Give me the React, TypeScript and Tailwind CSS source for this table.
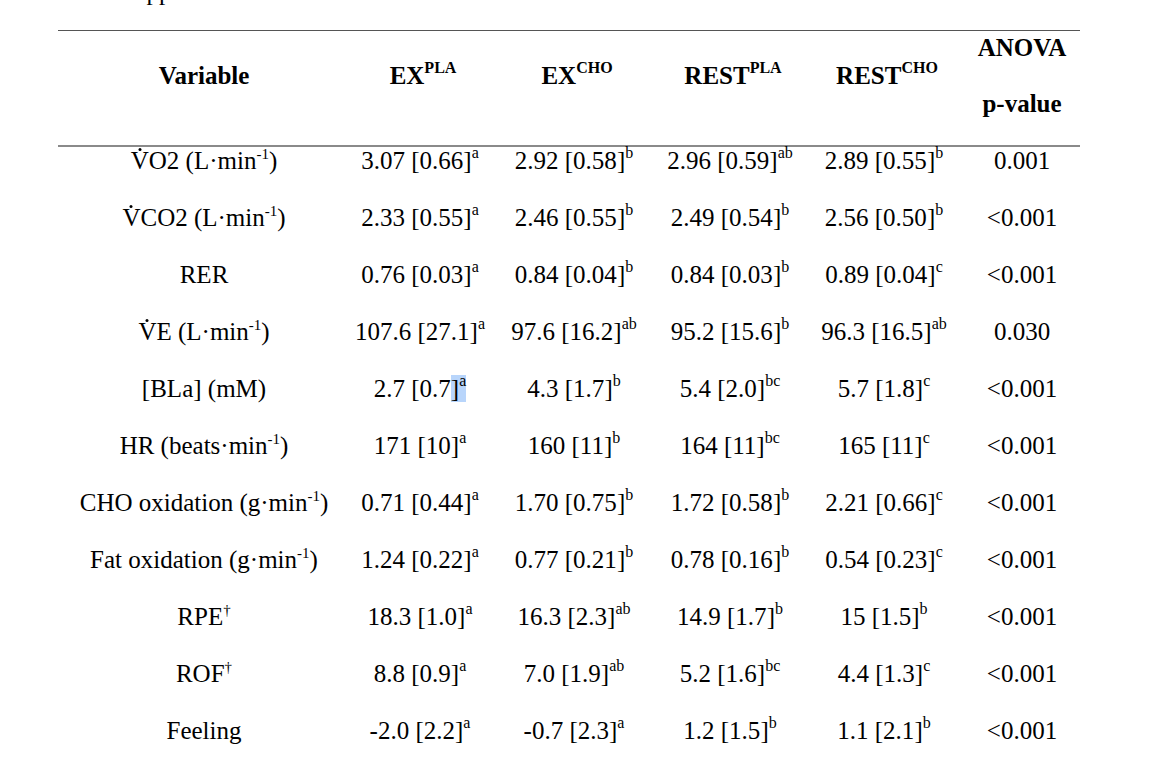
import React from 'react';

interface Cell {
  value: string;
  sup: string;
  highlight?: boolean;
}

interface Row {
  label: React.ReactNode;
  cells: Cell[];
  p: string;
}

// Small dot drawn over a letter (V-dot for rates)
const DotOver = ({ letter }: { letter: string }) => (
  <span className="relative inline-block">
    {letter}
    <span className="absolute left-1/2 top-[1px] h-[3px] w-[3px] -translate-x-1/2 rounded-full bg-black" />
  </span>
);

const PerMin = ({ unit }: { unit: string }) => (
  <>
    ({unit}·min<sup className="top-[-10px] text-[15px]">-1</sup>)
  </>
);

const c = (value: string, sup: string, highlight = false): Cell => ({ value, sup, highlight });

const rows: Row[] = [
  {
    label: <><DotOver letter="V" />O2 <PerMin unit="L" /></>,
    cells: [c('3.07 [0.66', 'a'), c('2.92 [0.58', 'b'), c('2.96 [0.59', 'ab'), c('2.89 [0.55', 'b')],
    p: '0.001',
  },
  {
    label: <><DotOver letter="V" />CO2 <PerMin unit="L" /></>,
    cells: [c('2.33 [0.55', 'a'), c('2.46 [0.55', 'b'), c('2.49 [0.54', 'b'), c('2.56 [0.50', 'b')],
    p: '<0.001',
  },
  {
    label: 'RER',
    cells: [c('0.76 [0.03', 'a'), c('0.84 [0.04', 'b'), c('0.84 [0.03', 'b'), c('0.89 [0.04', 'c')],
    p: '<0.001',
  },
  {
    label: <><DotOver letter="V" />E <PerMin unit="L" /></>,
    cells: [c('107.6 [27.1', 'a'), c('97.6 [16.2', 'ab'), c('95.2 [15.6', 'b'), c('96.3 [16.5', 'ab')],
    p: '0.030',
  },
  {
    label: '[BLa] (mM)',
    cells: [c('2.7 [0.7', 'a', true), c('4.3 [1.7', 'b'), c('5.4 [2.0', 'bc'), c('5.7 [1.8', 'c')],
    p: '<0.001',
  },
  {
    label: <>HR <PerMin unit="beats" /></>,
    cells: [c('171 [10', 'a'), c('160 [11', 'b'), c('164 [11', 'bc'), c('165 [11', 'c')],
    p: '<0.001',
  },
  {
    label: <>CHO oxidation <PerMin unit="g" /></>,
    cells: [c('0.71 [0.44', 'a'), c('1.70 [0.75', 'b'), c('1.72 [0.58', 'b'), c('2.21 [0.66', 'c')],
    p: '<0.001',
  },
  {
    label: <>Fat oxidation <PerMin unit="g" /></>,
    cells: [c('1.24 [0.22', 'a'), c('0.77 [0.21', 'b'), c('0.78 [0.16', 'b'), c('0.54 [0.23', 'c')],
    p: '<0.001',
  },
  {
    label: <>RPE<sup className="top-[-10px] text-[15px]">†</sup></>,
    cells: [c('18.3 [1.0', 'a'), c('16.3 [2.3', 'ab'), c('14.9 [1.7', 'b'), c('15 [1.5', 'b')],
    p: '<0.001',
  },
  {
    label: <>ROF<sup className="top-[-10px] text-[15px]">†</sup></>,
    cells: [c('8.8 [0.9', 'a'), c('7.0 [1.9', 'ab'), c('5.2 [1.6', 'bc'), c('4.4 [1.3', 'c')],
    p: '<0.001',
  },
  {
    label: 'Feeling',
    cells: [c('-2.0 [2.2', 'a'), c('-0.7 [2.3', 'a'), c('1.2 [1.5', 'b'), c('1.1 [2.1', 'b')],
    p: '<0.001',
  },
];

const headers = [
  { name: 'EX', sup: 'PLA' },
  { name: 'EX', sup: 'CHO' },
  { name: 'REST', sup: 'PLA' },
  { name: 'REST', sup: 'CHO' },
];

const grid = 'grid grid-cols-[292px_140px_168px_144px_164px_112px]';

const ValueCell = ({ cell }: { cell: Cell }) => {
  const sup = <sup className="top-[-11px] text-[16px]">{cell.sup}</sup>;
  return (
    <div className="text-center leading-[28px] whitespace-nowrap">
      {cell.value}
      {cell.highlight ? (
        <span className="bg-[#b8d5fb]">]{sup}</span>
      ) : (
        <>]{sup}</>
      )}
    </div>
  );
};

const App = () => {
  return (
    <div className="h-[770px] w-[1156px] overflow-hidden bg-white font-['Liberation_Serif',serif] text-[25px] text-black">
      {/* tail of the line above the table, cut off by the screenshot */}
      <div className="h-[6px] overflow-hidden pl-[120px]">
        <div className="-mt-[22px] leading-[28px]">Supplemental</div>
      </div>

      <div className="mt-[24px] ml-[58px] w-[1022px]">
        <div className="h-px bg-[#555]" />

        {/* header */}
        <div className={`${grid} h-[114px] font-bold`}>
          <div className="pt-[31px] text-center leading-[28px]">Variable</div>
          {headers.map((h, i) => (
            <div key={i} className="pt-[31px] pl-[6px] text-center leading-[28px] whitespace-nowrap">
              {h.name}
              <sup className="top-[-11px] text-[16px]">{h.sup}</sup>
            </div>
          ))}
          <div className="pt-[3px] text-center leading-[28px]">
            <div>ANOVA</div>
            <div className="mt-[28px]">p-value</div>
          </div>
        </div>

        <div className="h-[2px] bg-[#8a8a8a]" />

        {/* body */}
        {rows.map((row, i) => (
          <div key={i} className={`${grid} h-[57px]`}>
            <div className="text-center leading-[28px] whitespace-nowrap">{row.label}</div>
            {row.cells.map((cell, j) => (
              <ValueCell key={j} cell={cell} />
            ))}
            <div className="text-center leading-[28px]">{row.p}</div>
          </div>
        ))}
      </div>
    </div>
  );
};

export default App;
